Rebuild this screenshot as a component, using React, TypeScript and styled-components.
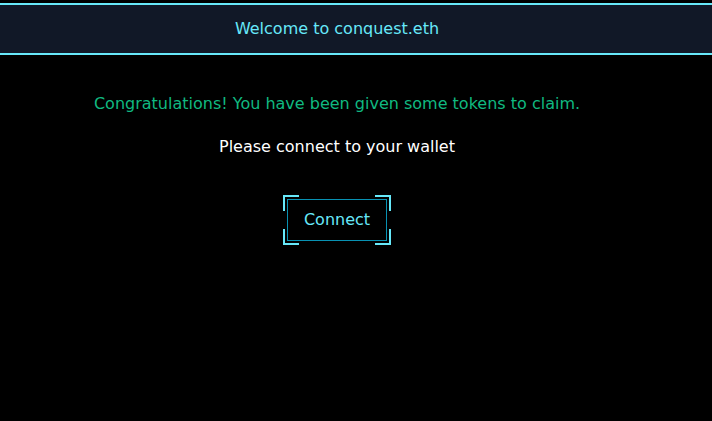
import React from "react";
import styled, { createGlobalStyle } from "styled-components";

const Global = createGlobalStyle`
  html, body { margin: 0; padding: 0; background: #000; }
  body { font-family: "DejaVu Sans", sans-serif; }
`;

const Page = styled.div`
  width: 712px;
  height: 421px;
  background: #000;
  padding-top: 3px;
  box-sizing: border-box;
`;

const Header = styled.header`
  height: 52px;
  box-sizing: border-box;
  background: #111827;
  border-top: 2px solid #67e8f9;
  border-bottom: 2px solid #67e8f9;
  display: flex;
  align-items: center;
  justify-content: center;
  padding: 0 38px 2px 0;
  color: #67e8f9;
  font-size: 16px;
`;

const Content = styled.main`
  display: flex;
  flex-direction: column;
  align-items: center;
  padding-right: 38px;
  padding-top: 37px;
`;

const Congrats = styled.p`
  margin: 0;
  color: #10b981;
  font-size: 16px;
  line-height: 24px;
`;

const Prompt = styled.p`
  margin: 19px 0 0;
  color: #fff;
  font-size: 16px;
  line-height: 24px;
`;

const Frame = styled.div`
  position: relative;
  margin-top: 36px;
  padding: 4px;
`;

const Corner = styled.span<{ $v: "top" | "bottom"; $h: "left" | "right" }>`
  position: absolute;
  width: 16px;
  height: 16px;
  ${(p) => p.$v}: 0;
  ${(p) => p.$h}: 0;
  border-${(p) => p.$v}: 2px solid #67e8f9;
  border-${(p) => p.$h}: 2px solid #67e8f9;
  box-sizing: border-box;
`;

const Button = styled.button`
  display: block;
  width: 100px;
  height: 42px;
  box-sizing: border-box;
  background: #000;
  border: 1px solid #0891b2;
  color: #67e8f9;
  font-family: "DejaVu Sans", sans-serif;
  font-size: 16px;
  padding: 0 0 2px;
  cursor: pointer;
`;

export default function App() {
  return (
    <>
      <Global />
      <Page>
        <Header>Welcome to conquest.eth</Header>
        <Content>
          <Congrats>Congratulations! You have been given some tokens to claim.</Congrats>
          <Prompt>Please connect to your wallet</Prompt>
          <Frame>
            <Corner $v="top" $h="left" />
            <Corner $v="top" $h="right" />
            <Corner $v="bottom" $h="left" />
            <Corner $v="bottom" $h="right" />
            <Button>Connect</Button>
          </Frame>
        </Content>
      </Page>
    </>
  );
}
